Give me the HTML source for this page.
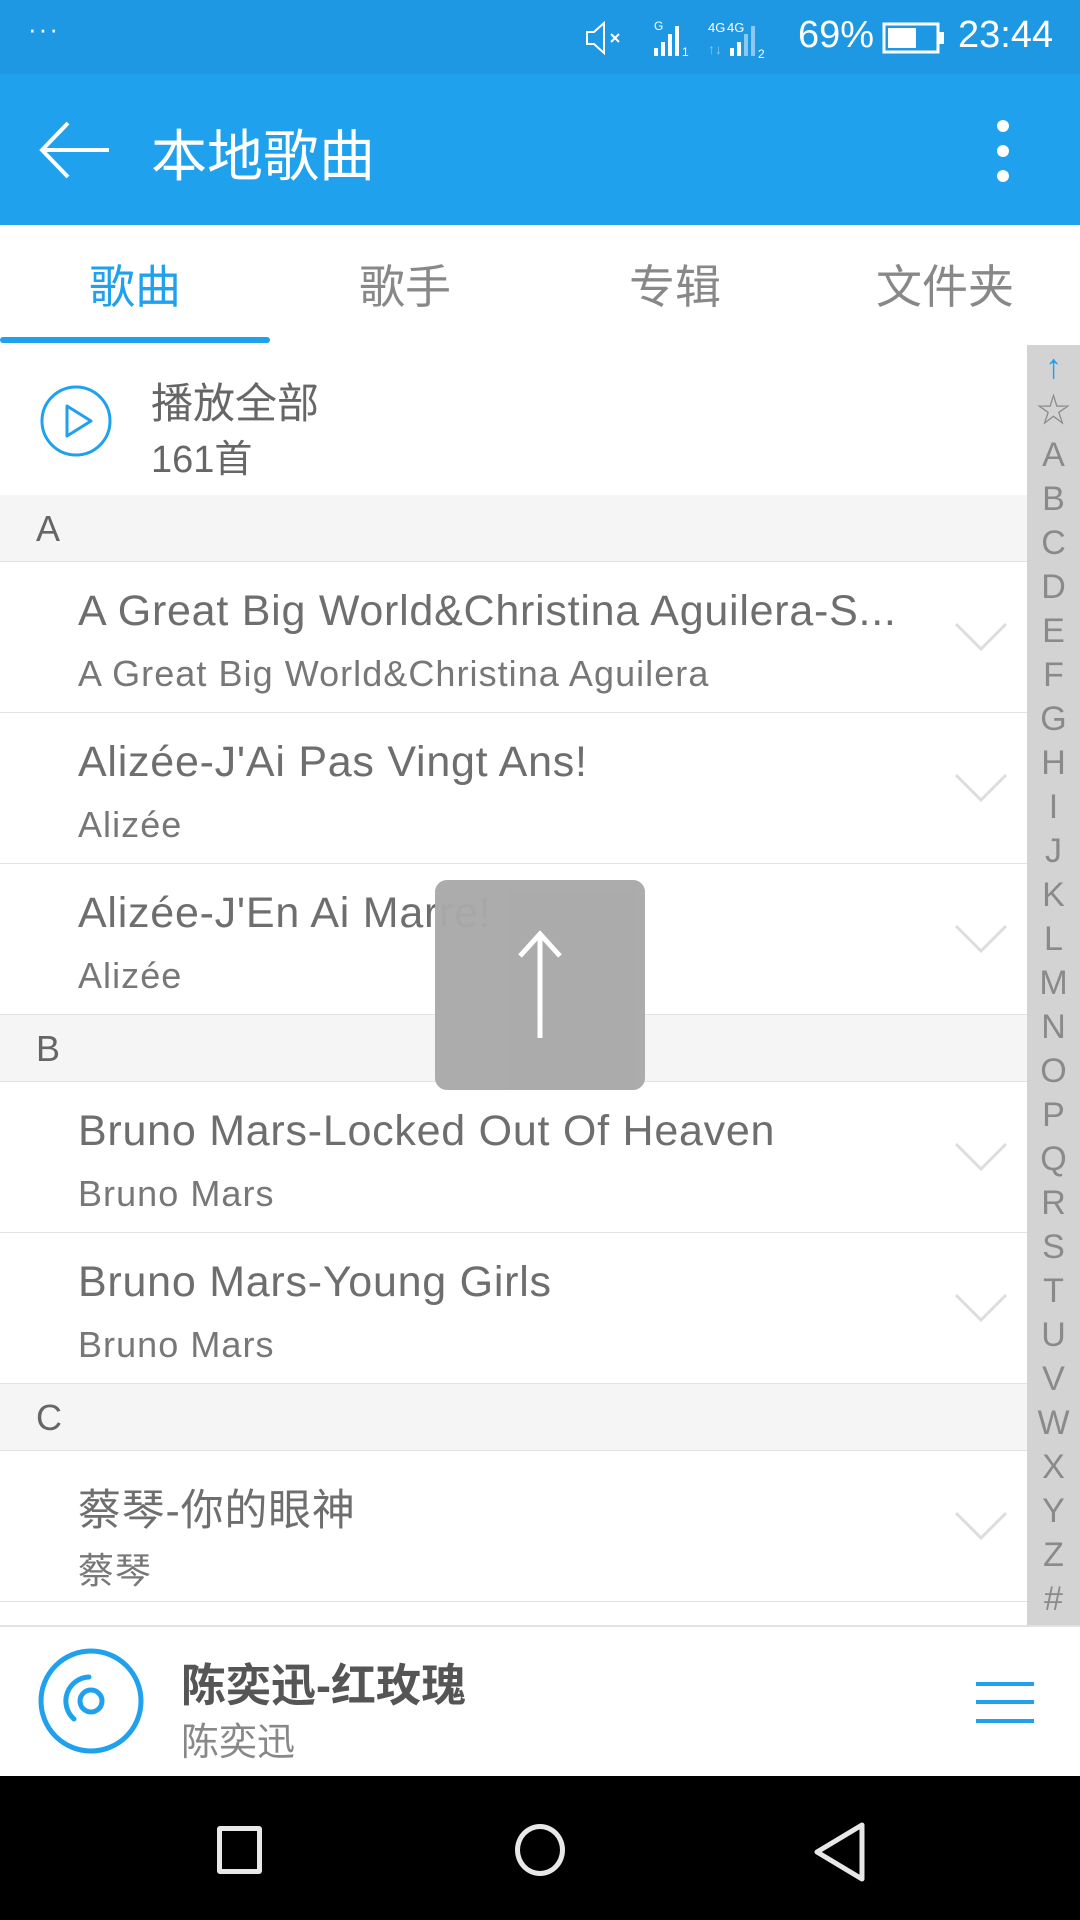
<!DOCTYPE html>
<html><head><meta charset="utf-8">
<style>
*{margin:0;padding:0;box-sizing:border-box}
body{width:1080px;height:1920px;position:relative;overflow:hidden;background:#fff;font-family:"Liberation Sans","Noto Sans CJK SC",sans-serif}
.abs{position:absolute}
.sb{left:0;top:0;width:1080px;height:74px;background:#1e98e2;color:#fff}
.ab{left:0;top:74px;width:1080px;height:151px;background:#1fa1ee;color:#fff}
.tab{top:257px;font-size:46px;color:#888;width:270px;text-align:center;line-height:60px}
.hdr{left:0;width:1027px;height:67px;background:#f5f5f5;border-bottom:1px solid #e2e2e2;font-size:36px;color:#666;padding-left:36px;line-height:67px}
.row{left:0;width:1027px;height:151px;border-bottom:1px solid #e2e2e2}
.t1{position:absolute;left:78px;top:25px;font-size:43px;color:#6e6e6e;white-space:nowrap;letter-spacing:0.75px}
.t2{position:absolute;left:78px;top:91px;font-size:36px;color:#777;white-space:nowrap;letter-spacing:1.05px}
.chev{position:absolute;left:955px;top:60px}
.side{left:1027px;top:345px;width:53px;height:1280px;background:#d3d3d3}
.side div{height:44px;line-height:44px;text-align:center;font-size:34px;color:#8a8a8a}
</style></head><body>
<div class="abs sb">
 <div class="abs" style="left:28px;top:14px;font-size:26px;letter-spacing:2px">···</div>
 <svg class="abs" style="left:585px;top:20px" width="44" height="36" viewBox="0 0 44 36"><path d="M2 12h7l10-9v30l-10-9H2z" fill="none" stroke="#fff" stroke-width="2"/><path d="M26 14l8 8M34 14l-8 8" stroke="#fff" stroke-width="2"/></svg>
 <svg class="abs" style="left:652px;top:18px" width="150" height="40" viewBox="0 0 150 40">
  <text x="2" y="12" font-size="12" fill="#fff" font-family="Liberation Sans">G</text>
  <rect x="2" y="30" width="4" height="8" fill="#fff"/><rect x="9" y="24" width="4" height="14" fill="#fff"/><rect x="16" y="16" width="4" height="22" fill="#fff"/><rect x="23" y="8" width="4" height="30" fill="#fff"/>
  <text x="30" y="38" font-size="12" fill="#fff">1</text>
  <text x="56" y="14" font-size="13" fill="#fff">4G</text><text x="75" y="14" font-size="13" fill="#fff">4G</text>
  <text x="56" y="36" font-size="14" fill="#8cc8f0">↑↓</text>
  <rect x="78" y="30" width="4" height="8" fill="#fff"/><rect x="85" y="24" width="4" height="14" fill="#fff"/><rect x="92" y="16" width="4" height="22" fill="#8cc8f0"/><rect x="99" y="8" width="4" height="30" fill="#8cc8f0"/>
  <text x="106" y="40" font-size="12" fill="#fff">2</text>
 </svg>
 <div class="abs" style="left:798px;top:14px;font-size:38px">69%</div>
 <svg class="abs" style="left:882px;top:22px" width="64" height="32" viewBox="0 0 64 32"><rect x="2" y="2" width="54" height="28" fill="none" stroke="#fff" stroke-width="3"/><rect x="6" y="6" width="28" height="20" fill="#fff"/><rect x="57" y="10" width="5" height="12" fill="#fff"/></svg>
 <div class="abs" style="left:958px;top:14px;font-size:38px">23:44</div>
</div>
<div class="abs ab">
 <svg class="abs" style="left:38px;top:45px" width="75" height="62" viewBox="0 0 75 62"><path d="M30 4L4 31l26 27M4 31h67" fill="none" stroke="#fff" stroke-width="4"/></svg>
 <div class="abs" style="left:151px;top:38px;font-size:56px">本地歌曲</div>
 <div class="abs" style="left:997px;top:46px;width:12px;height:12px;border-radius:6px;background:#fff"></div>
 <div class="abs" style="left:997px;top:71px;width:12px;height:12px;border-radius:6px;background:#fff"></div>
 <div class="abs" style="left:997px;top:96px;width:12px;height:12px;border-radius:6px;background:#fff"></div>
</div>
<div class="abs tab" style="left:0;color:#1fa1ee">歌曲</div>
<div class="abs tab" style="left:270px">歌手</div>
<div class="abs tab" style="left:540px">专辑</div>
<div class="abs tab" style="left:810px">文件夹</div>
<div class="abs" style="left:0;top:337px;width:270px;height:6px;background:#1fa1ee;border-radius:3px"></div>

<svg class="abs" style="left:39px;top:384px" width="74" height="74" viewBox="0 0 74 74"><circle cx="37" cy="37" r="34" fill="none" stroke="#1fa1ee" stroke-width="3"/><path d="M28 22v30l24-15z" fill="none" stroke="#1fa1ee" stroke-width="3" stroke-linejoin="round"/></svg>
<div class="abs" style="left:151px;top:370px;font-size:42px;color:#666">播放全部</div>
<div class="abs" style="left:151px;top:428px;font-size:38px;color:#666">161首</div>

<div class="abs hdr" style="top:495px">A</div>
<div class="abs row" style="top:562px"><div class="t1">A Great Big World&amp;Christina Aguilera-S...</div><div class="t2">A Great Big World&amp;Christina Aguilera</div><svg class="chev" width="52" height="30"><path d="M1 2l25 25L51 2" fill="none" stroke="#ddd" stroke-width="3"/></svg></div>
<div class="abs row" style="top:713px"><div class="t1">Alizée-J'Ai Pas Vingt Ans!</div><div class="t2">Alizée</div><svg class="chev" width="52" height="30"><path d="M1 2l25 25L51 2" fill="none" stroke="#ddd" stroke-width="3"/></svg></div>
<div class="abs row" style="top:864px"><div class="t1">Alizée-J'En Ai Marre!</div><div class="t2">Alizée</div><svg class="chev" width="52" height="30"><path d="M1 2l25 25L51 2" fill="none" stroke="#ddd" stroke-width="3"/></svg></div>
<div class="abs hdr" style="top:1015px">B</div>
<div class="abs row" style="top:1082px"><div class="t1">Bruno Mars-Locked Out Of Heaven</div><div class="t2">Bruno Mars</div><svg class="chev" width="52" height="30"><path d="M1 2l25 25L51 2" fill="none" stroke="#ddd" stroke-width="3"/></svg></div>
<div class="abs row" style="top:1233px"><div class="t1">Bruno Mars-Young Girls</div><div class="t2">Bruno Mars</div><svg class="chev" width="52" height="30"><path d="M1 2l25 25L51 2" fill="none" stroke="#ddd" stroke-width="3"/></svg></div>
<div class="abs hdr" style="top:1384px">C</div>
<div class="abs row" style="top:1451px"><div class="t1">蔡琴-你的眼神</div><div class="t2">蔡琴</div><svg class="chev" width="52" height="30"><path d="M1 2l25 25L51 2" fill="none" stroke="#ddd" stroke-width="3"/></svg></div>

<div class="abs" style="left:435px;top:880px;width:210px;height:210px;background:#a9a9a9;border-radius:12px;opacity:.97">
 <svg class="abs" style="left:80px;top:50px" width="50" height="110" viewBox="0 0 50 110"><path d="M25 108V4M5 26L25 4l20 22" fill="none" stroke="#fff" stroke-width="5"/></svg>
</div>

<div class="abs side">
 <div style="color:#1fa1ee">↑</div><div>☆</div><div>A</div><div>B</div><div>C</div><div>D</div><div>E</div><div>F</div><div>G</div><div>H</div><div>I</div><div>J</div><div>K</div><div>L</div><div>M</div><div>N</div><div>O</div><div>P</div><div>Q</div><div>R</div><div>S</div><div>T</div><div>U</div><div>V</div><div>W</div><div>X</div><div>Y</div><div>Z</div><div>#</div>
</div>

<div class="abs" style="left:0;top:1625px;width:1080px;height:151px;background:#fff;border-top:2px solid #e2e2e2">
 <svg class="abs" style="left:37px;top:20px" width="108" height="108" viewBox="0 0 108 108"><circle cx="54" cy="54" r="50" fill="none" stroke="#1fa1ee" stroke-width="5"/><circle cx="54" cy="54" r="11" fill="none" stroke="#1fa1ee" stroke-width="5"/><path d="M37 72A24 24 0 0 1 52 30" fill="none" stroke="#1fa1ee" stroke-width="5" stroke-linecap="round"/></svg>
 <div class="abs" style="left:181px;top:22px;font-size:45px;font-weight:bold;color:#555">陈奕迅-红玫瑰</div>
 <div class="abs" style="left:181px;top:84px;font-size:38px;color:#888">陈奕迅</div>
 <div class="abs" style="left:976px;top:55px;width:58px;height:4px;background:#1fa1ee"></div>
 <div class="abs" style="left:976px;top:73px;width:58px;height:4px;background:#1fa1ee"></div>
 <div class="abs" style="left:976px;top:92px;width:58px;height:4px;background:#1fa1ee"></div>
</div>
<div class="abs" style="left:0;top:1776px;width:1080px;height:144px;background:#000">
 <div class="abs" style="left:217px;top:50px;width:45px;height:48px;border:5px solid #e8e8e8;border-radius:3px"></div>
 <div class="abs" style="left:515px;top:48px;width:50px;height:52px;border:5px solid #e8e8e8;border-radius:50%"></div>
 <svg class="abs" style="left:812px;top:46px" width="56" height="60" viewBox="0 0 56 60"><path d="M50 3v54L5 30z" fill="none" stroke="#e8e8e8" stroke-width="5" stroke-linejoin="round"/></svg>
</div>
</body></html>
